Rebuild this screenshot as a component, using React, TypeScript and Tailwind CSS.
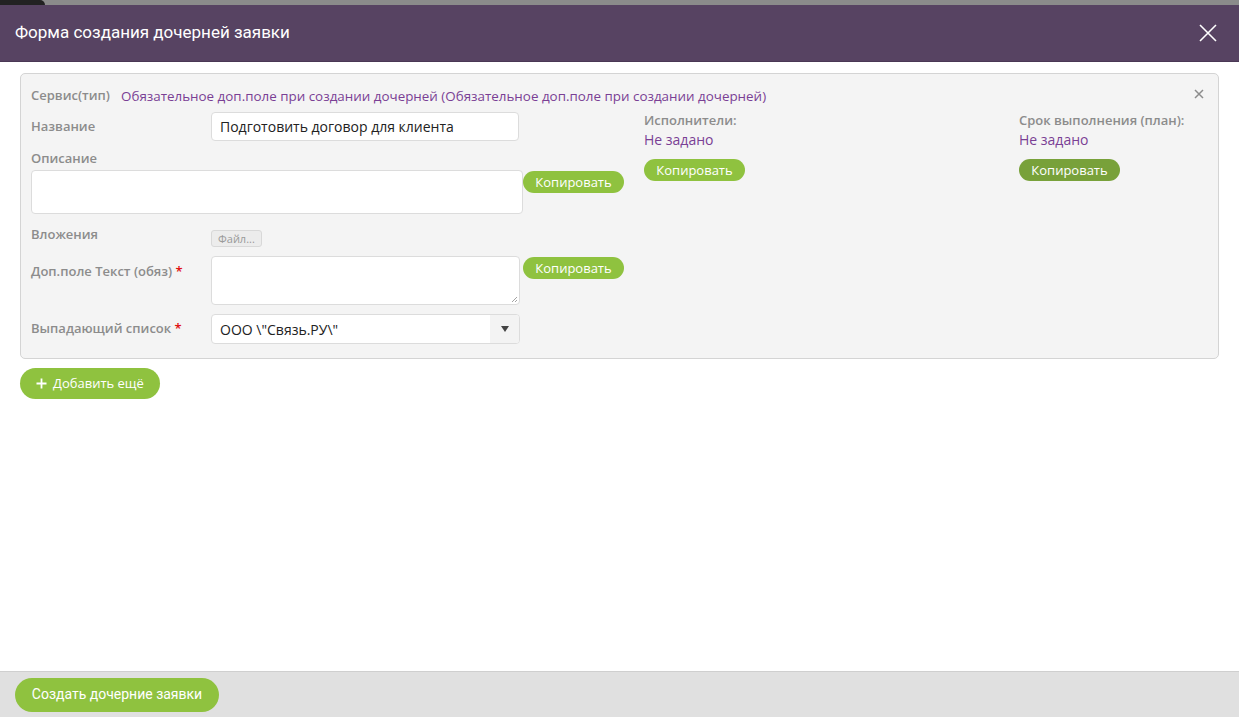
import React from "react";

const label = "text-[13px] font-semibold text-[#8c8c8c]";
const green = "bg-[#8fc23f] text-white rounded-full";

function CopyBtn({ dark, className = "" }: { dark?: boolean; className?: string }) {
  return (
    <button
      className={`${dark ? "bg-[#78a13a]" : "bg-[#8fc23f]"} text-white rounded-full h-[22px] w-[101px] text-[13px] leading-[22px] ${className}`}
      style={{ fontFamily: "'Open Sans', sans-serif" }}
    >
      Копировать
    </button>
  );
}

export default function App() {
  return (
    <div className="w-[1239px] h-[717px] flex flex-col bg-white overflow-hidden" style={{ fontFamily: "'Open Sans', 'Liberation Sans', sans-serif" }}>
      {/* background strip of the page under the modal */}
      <div className="h-[5px] bg-[#8b8b8b] flex shrink-0">
        <div className="w-[45px] h-full bg-[#222] rounded-tr-[6px]" />
      </div>
      {/* header */}
      <div className="h-[57px] shrink-0 bg-[#574362] flex items-center justify-between pl-[15px] pr-[20px] border-b border-[#4a3855]">
        <div className="text-white text-[17px]" style={{ fontFamily: "Roboto, sans-serif" }}>
          Форма создания дочерней заявки
        </div>
        <svg width="20" height="20" viewBox="0 0 20 20" className="mr-[1px]">
          <path d="M2 2 L18 18 M18 2 L2 18" stroke="white" strokeWidth="1.6" />
        </svg>
      </div>
      {/* content */}
      <div className="flex-1 px-[20px] pt-[11px]">
        <div className="relative border border-[#d4d4d4] rounded-[5px] bg-[#f4f4f4] pl-[10px] pr-[10px] pt-[13px] pb-[14px]">
          <div className="absolute right-[14px] top-[15px]">
            <svg width="10" height="10" viewBox="0 0 10 10">
              <path d="M1 1 L9 9 M9 1 L1 9" stroke="#8c8c8c" strokeWidth="1.5" />
            </svg>
          </div>
          <div className="flex items-center h-[18px] text-[13.4px]">
            <span className="font-semibold text-[#8c8c8c] text-[13px] w-[90px]">Сервис(тип)</span>
            <span className="text-[#7a3f94]">Обязательное доп.поле при создании дочерней (Обязательное доп.поле при создании дочерней)</span>
          </div>
          <div className="flex mt-[7px]">
            {/* left column */}
            <div className="w-[593px] shrink-0">
              <div className="flex items-center h-[29px]">
                <div className={`${label} w-[180px]`}>Название</div>
                <div className="w-[308px] h-[29px] border border-[#dcdcdc] rounded-[4px] bg-white px-[8px] flex items-center text-[14px] text-[#222]">
                  Подготовить договор для клиента
                </div>
              </div>
              <div className={`${label} mt-[8px] h-[18px] leading-[18px]`}>Описание</div>
              <div className="flex items-start mt-[3px]">
                <div className="w-[492px] h-[44px] border border-[#dcdcdc] rounded-[4px] bg-white" />
                <CopyBtn className="mt-[1px]" />
              </div>
              <div className="flex items-start mt-[11px]">
                <div className={`${label} w-[180px] h-[18px] leading-[18px]`}>Вложения</div>
                <div className="mt-[5px] h-[17px] px-[6px] border border-[#d8d8d8] rounded-[3px] bg-[#ececec] text-[11px] text-[#9a9a9a] leading-[15px]">Файл...</div>
              </div>
              <div className="flex items-start mt-[9px]">
                <div className={`${label} w-[180px] mt-[6px]`}>
                  Доп.поле Текст (обяз) <span className="text-[#e01010]">*</span>
                </div>
                <div className="relative w-[309px] h-[49px] border border-[#dcdcdc] rounded-[4px] bg-white">
                  <svg className="absolute right-[1px] bottom-[1px]" width="7" height="7" viewBox="0 0 7 7">
                    <path d="M6 1 L1 6 M6 4 L4 6" stroke="#999" strokeWidth="0.9" />
                  </svg>
                </div>
                <CopyBtn className="ml-[3px] mt-[1px]" />
              </div>
              <div className="flex items-center mt-[9px]">
                <div className={`${label} w-[180px]`}>
                  Выпадающий список <span className="text-[#e01010]">*</span>
                </div>
                <div className="w-[309px] h-[30px] border border-[#dcdcdc] rounded-[4px] bg-white flex items-stretch overflow-hidden">
                  <div className="flex-1 flex items-center px-[8px] text-[14px] text-[#222]">ООО \"Связь.РУ\"</div>
                  <div className="w-[29px] bg-[#f3f3f3] flex items-center justify-center">
                    <svg width="8" height="6" viewBox="0 0 8 6">
                      <path d="M0 0 L8 0 L4 6 Z" fill="#444" />
                    </svg>
                  </div>
                </div>
              </div>
            </div>
            {/* middle column */}
            <div className="ml-[20px] w-[375px] shrink-0">
              <div className={`${label} leading-[16px]`}>Исполнители:</div>
              <div className="text-[14px] text-[#7a3f94] mt-[3px] leading-[18px]">Не задано</div>
              <CopyBtn className="mt-[10px]" />
            </div>
            {/* right column */}
            <div className="flex-1">
              <div className={`${label} leading-[16px]`}>Срок выполнения (план):</div>
              <div className="text-[14px] text-[#7a3f94] mt-[3px] leading-[18px]">Не задано</div>
              <CopyBtn dark className="mt-[10px]" />
            </div>
          </div>
        </div>
        <button className={`${green} mt-[9px] h-[31px] px-[16px] text-[13px] flex items-center gap-[6px]`}>
          <svg width="11" height="11" viewBox="0 0 11 11">
            <path d="M5.5 0.5 V10.5 M0.5 5.5 H10.5" stroke="white" strokeWidth="1.8" />
          </svg>
          Добавить ещё
        </button>
      </div>
      {/* footer */}
      <div className="h-[46px] shrink-0 bg-[#e0e0e0] border-t border-[#cfcfcf] flex items-center pl-[15px]">
        <button className={`${green} h-[34px] w-[204px] text-[14px]`} style={{ fontFamily: "Roboto, sans-serif" }}>
          Создать дочерние заявки
        </button>
      </div>
    </div>
  );
}
